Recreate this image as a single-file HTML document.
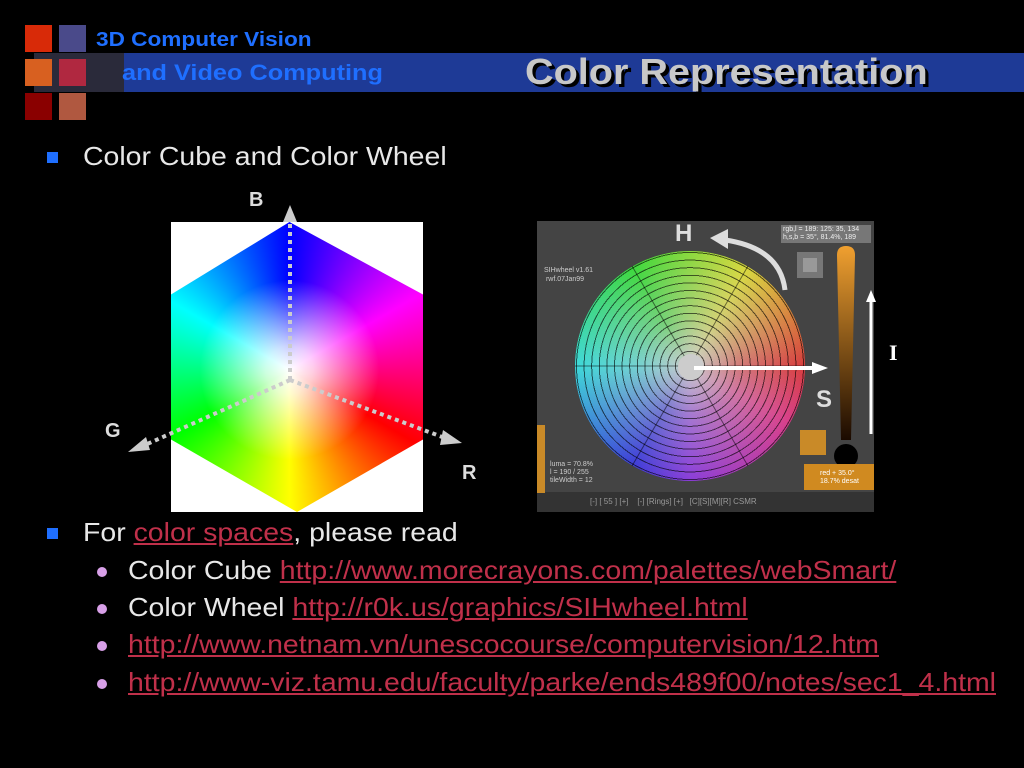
<!DOCTYPE html>
<html><head><style>
body{margin:0;width:1024px;height:768px;background:#000;position:relative;overflow:hidden;font-family:"Liberation Sans",sans-serif}
.a{position:absolute}
.sq{position:absolute;width:27px;height:27px}
.lk{color:#c0304a;text-decoration:underline}
.t{position:absolute;color:#e8e8e8;font-size:26px;white-space:nowrap;transform:scaleX(1.094);transform-origin:0 0}
</style></head><body>
<div class="a" style="left:34px;top:53px;width:990px;height:39px;background:#1e3a96"></div>
<div class="a" style="left:34px;top:53px;width:90px;height:39px;background:#2a2a3a"></div>
<div class="sq" style="left:25px;top:25px;background:#d82a08"></div>
<div class="sq" style="left:59px;top:25px;background:#4a4a8a"></div>
<div class="sq" style="left:25px;top:59px;background:#d86020"></div>
<div class="sq" style="left:59px;top:59px;background:#b02840"></div>
<div class="sq" style="left:25px;top:93px;background:#8a0000"></div>
<div class="sq" style="left:59px;top:93px;background:#b05840"></div>
<div class="a" style="left:96px;top:29px;color:#1f6fff;font-weight:bold;font-size:20px;transform:scaleX(1.13);transform-origin:0 0">3D Computer Vision</div>
<div class="a" style="left:122px;top:60px;color:#1f6fff;font-weight:bold;font-size:22px;transform:scaleX(1.15);transform-origin:0 0">and Video Computing</div>
<div class="a" style="left:525px;top:51px;color:#c8c8c8;font-weight:bold;font-size:36px;text-shadow:3px 3px 0 #000;transform:scaleX(1.1);transform-origin:0 0">Color Representation</div>
<div class="a" style="left:47px;top:152px;width:11px;height:11px;background:#1f6fff"></div>
<div class="t" style="left:83px;top:141px">Color Cube and Color Wheel</div>
<div class="a" style="left:171px;top:222px;width:252px;height:290px;background:#fff"></div>
<div class="a" style="left:171px;top:222px;width:252px;height:290px;clip-path:polygon(47% 0,100% 25%,100% 75%,50% 100%,0 75%,0 25%);background:radial-gradient(circle at 47% 51%,#fff 0,rgba(255,255,255,.8) 12%,rgba(255,255,255,0) 45%),conic-gradient(from 0deg at 47% 51%,#00f,#f0f 60deg,#f00 120deg,#ff0 180deg,#0f0 240deg,#0ff 300deg,#00f)"></div>
<svg class="a" style="left:0;top:0" width="1024" height="768">
<g stroke="#ccc" stroke-width="4" stroke-dasharray="4,4" fill="none">
<line x1="290" y1="380" x2="290" y2="222"/><line x1="290" y1="380" x2="145" y2="445"/><line x1="290" y1="380" x2="445" y2="438"/></g>
<polygon points="290,205 283,222 297,222" fill="#ccc"/><polygon points="128,452 146,437 150,450" fill="#ccc"/><polygon points="462,443 443,430 440,445" fill="#ccc"/>
</svg>
<div class="a" style="left:249px;top:189px;color:#ddd;font-weight:bold;font-size:20px">B</div>
<div class="a" style="left:105px;top:420px;color:#ddd;font-weight:bold;font-size:20px">G</div>
<div class="a" style="left:462px;top:462px;color:#ddd;font-weight:bold;font-size:20px">R</div>
<div class="a" style="left:537px;top:221px;width:337px;height:271px;background:#444"></div>
<div class="a" style="left:537px;top:492px;width:337px;height:20px;background:#333"></div>
<div class="a" style="left:575px;top:251px;width:230px;height:230px;border-radius:50%;background:repeating-radial-gradient(circle,rgba(0,0,0,0) 0 6.6px,rgba(0,0,0,.6) 6.6px 7.6px),radial-gradient(circle,#ccc 0,rgba(200,200,200,.55) 30%,rgba(200,200,200,0) 95%),conic-gradient(hsl(90,80%,48%),hsl(60,80%,48%) 30deg,hsl(30,80%,48%) 60deg,hsl(0,80%,48%) 90deg,hsl(330,80%,48%) 120deg,hsl(270,80%,48%) 180deg,hsl(240,80%,48%) 210deg,hsl(180,80%,48%) 270deg,hsl(120,80%,48%) 330deg,hsl(90,80%,48%))"></div>
<svg class="a" style="left:0;top:0" width="1024" height="768">
<g stroke="rgba(0,0,0,.5)" stroke-width="1">
<line x1="575" y1="366" x2="805" y2="366"/><line x1="632" y1="266" x2="748" y2="466"/><line x1="748" y1="266" x2="632" y2="466"/></g>
</svg>
<div class="a" style="left:678px;top:354px;width:26px;height:26px;border-radius:50%;background:#ccc"></div>
<svg class="a" style="left:0;top:0" width="1024" height="768">
<line x1="694" y1="368" x2="815" y2="368" stroke="#fff" stroke-width="4"/><polygon points="828,368 812,362 812,374" fill="#fff"/>
<path d="M785,290 Q780,248 725,240" stroke="#ddd" stroke-width="5" fill="none"/><polygon points="710,238 728,229 728,249" fill="#ddd"/>
<line x1="871" y1="434" x2="871" y2="300" stroke="#fff" stroke-width="3"/><polygon points="871,290 866,302 876,302" fill="#fff"/>
<path d="M837,255 Q837,246 846,246 Q855,246 855,255 L851,440 L841,440 Z" fill="url(#g)"/>
<defs><linearGradient id="g" x1="0" y1="0" x2="0" y2="1"><stop offset="0" stop-color="#f0a030"/><stop offset="1" stop-color="#1a0a00"/></linearGradient></defs>
<circle cx="846" cy="456" r="12" fill="#000"/>
<rect x="804" y="464" width="70" height="26" fill="#d08a20"/>
<rect x="800" y="430" width="26" height="25" fill="#c98a28"/>
<rect x="797" y="252" width="26" height="26" fill="#777"/><rect x="803" y="258" width="14" height="14" fill="#999"/>
<rect x="781" y="225" width="90" height="18" fill="#777"/>
<rect x="537" y="425" width="8" height="68" fill="#c98a28"/>
</svg>
<div class="a" style="left:675px;top:220px;color:#ddd;font-weight:bold;font-size:24px">H</div>
<div class="a" style="left:816px;top:386px;color:#ddd;font-weight:bold;font-size:24px">S</div>
<div class="a" style="left:889px;top:340px;color:#fff;font-family:'Liberation Serif',serif;font-weight:bold;font-size:22px">I</div>
<div class="a" style="left:783px;top:226px;color:#eee;font-size:7px;line-height:8px">rgb,l = 189: 125: 35, 134<br>h,s,b = 35°, 81.4%, 189</div>
<div class="a" style="left:544px;top:266px;color:#ccc;font-size:7px;line-height:9px">SIHwheel v1.61<br>&nbsp;rwf.07Jan99</div>
<div class="a" style="left:550px;top:461px;color:#ccc;font-size:7px;line-height:8px">luma = 70.8%<br>l = 190 / 255<br>tileWidth = 12</div>
<div class="a" style="left:820px;top:470px;color:#fff;font-size:7px;line-height:8px">red + 35.0°<br>18.7% desat</div>
<div class="a" style="left:590px;top:497px;color:#999;font-size:8px;white-space:pre">[-] [ 55 ] [+]    [-] [Rings] [+]   [C][S][M][R] CSMR</div>
<div class="a" style="left:47px;top:528px;width:11px;height:11px;background:#1f6fff"></div>
<div class="t" style="left:83px;top:517px">For <span class="lk">color spaces</span>, please read</div>
<div class="a" style="left:97px;top:567px;width:10px;height:10px;border-radius:50%;background:#d8a0e8"></div>
<div class="t" style="left:128px;top:555px">Color Cube <span class="lk">http://www.morecrayons.com/palettes/webSmart/</span></div>
<div class="a" style="left:97px;top:604px;width:10px;height:10px;border-radius:50%;background:#d8a0e8"></div>
<div class="t" style="left:128px;top:592px">Color Wheel <span class="lk">http://r0k.us/graphics/SIHwheel.html</span></div>
<div class="a" style="left:97px;top:641px;width:10px;height:10px;border-radius:50%;background:#d8a0e8"></div>
<div class="t" style="left:128px;top:629px"><span class="lk">http://www.netnam.vn/unescocourse/computervision/12.htm</span></div>
<div class="a" style="left:97px;top:679px;width:10px;height:10px;border-radius:50%;background:#d8a0e8"></div>
<div class="t" style="left:128px;top:667px"><span class="lk">http://www-viz.tamu.edu/faculty/parke/ends489f00/notes/sec1_4.html</span></div>
</body></html>
